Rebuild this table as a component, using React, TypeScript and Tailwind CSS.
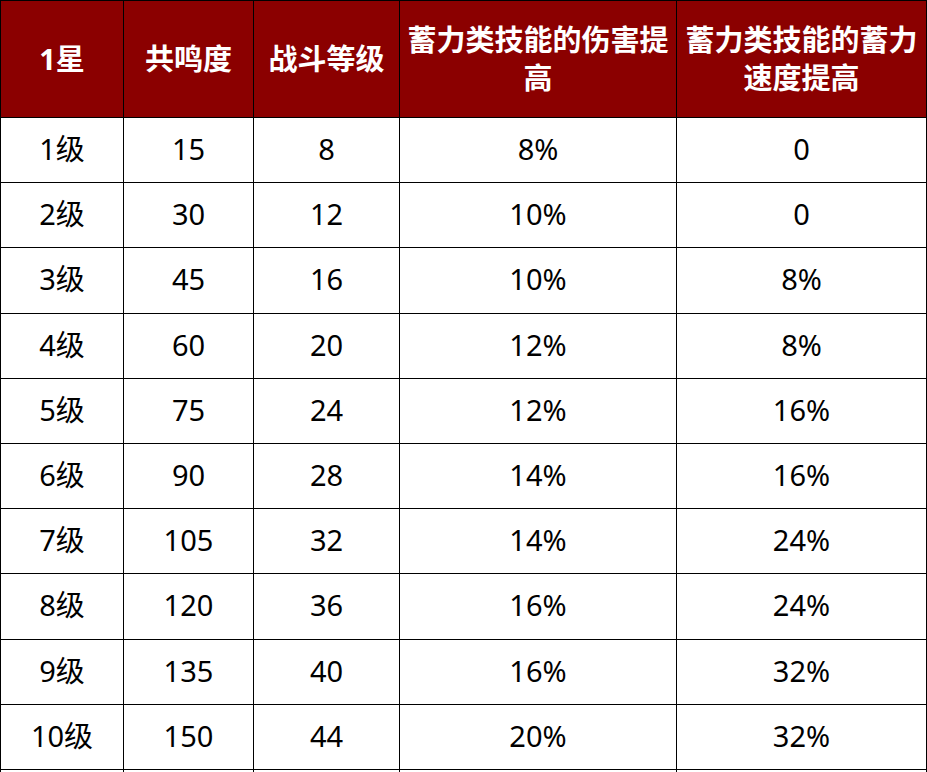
import React from "react";

const rows: string[][] = [
  ["1级", "15", "8", "8%", "0"],
  ["2级", "30", "12", "10%", "0"],
  ["3级", "45", "16", "10%", "8%"],
  ["4级", "60", "20", "12%", "8%"],
  ["5级", "75", "24", "12%", "16%"],
  ["6级", "90", "28", "14%", "16%"],
  ["7级", "105", "32", "14%", "24%"],
  ["8级", "120", "36", "16%", "24%"],
  ["9级", "135", "40", "16%", "32%"],
  ["10级", "150", "44", "20%", "32%"],
  ["", "", "", "", ""],
];

const headers = ["1星", "共鸣度", "战斗等级", "蓄力类技能的伤害提高", "蓄力类技能的蓄力速度提高"];

export default function App() {
  return (
    <div
      className="w-[927px] h-[772px] overflow-hidden bg-white"
      style={{ fontFamily: '"Noto Sans", "Noto Sans CJK SC", sans-serif' }}
    >
      <div className="grid grid-cols-[123px_130px_146px_277px_250px] border-l border-t border-black w-[927px]">
        {headers.map((h, i) => (
          <div
            key={i}
            className="h-[117px] bg-[#8b0000] border-r border-b border-black flex items-center justify-center text-center text-white font-bold text-[29px] leading-[38px] px-0.5"
          >
            {h}
          </div>
        ))}
        {rows.map((r, ri) =>
          r.map((c, ci) => (
            <div
              key={`${ri}-${ci}`}
              className="h-[65.2px] border-r border-b border-black flex items-center justify-center text-black text-[29px] leading-none pb-[3px]"
            >
              {c}
            </div>
          ))
        )}
      </div>
    </div>
  );
}
